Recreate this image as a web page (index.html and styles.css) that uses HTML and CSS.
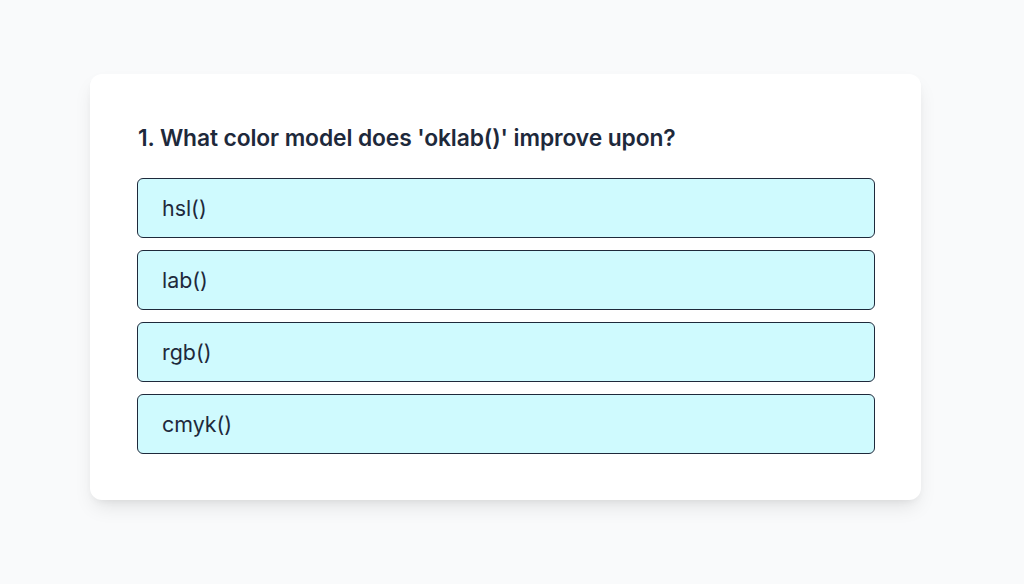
FILE: index.html
```html
<!DOCTYPE html>
<html>
<head>
<meta charset="utf-8">
<link rel="stylesheet" href="styles.css">
</head>
<body>
<div class="card">
  <h2 class="question">1. What color model does 'oklab()' improve upon?</h2>
  <div class="options">
    <button class="option">hsl()</button>
    <button class="option">lab()</button>
    <button class="option">rgb()</button>
    <button class="option">cmyk()</button>
  </div>
</div>
</body>
</html>
```
FILE: styles.css
```css
html, body {
  margin: 0;
  padding: 0;
}
body {
  background: #f9fafb;
  font-family: Inter, "Liberation Sans", sans-serif;
  color: #111827;
  height: 584px;
  padding-top: 74px;
  box-sizing: border-box;
}
.card {
  margin-left: 90px;
  width: 831px;
  box-sizing: border-box;
  background: #ffffff;
  border-radius: 12px;
  padding: 48px 46px 46px 47px;
  box-shadow: 0 10px 20px -4px rgba(0,0,0,0.1), 0 4px 8px -4px rgba(0,0,0,0.08);
}
.question {
  margin: 0 0 24px 1px;
  font-size: 22.8px;
  line-height: 32px;
  font-weight: 600;
  color: #1e293b;
  letter-spacing: -0.1px;
}
.options {
  display: flex;
  flex-direction: column;
  gap: 12px;
}
.option {
  display: block;
  width: 100%;
  text-align: left;
  background: #cffafe;
  border: 1px solid #1e293b;
  border-radius: 6px;
  padding: 15px 24px 15px 24px;
  font-family: inherit;
  font-size: 21.4px;
  line-height: 28px;
  color: #1e293b;
}
```
